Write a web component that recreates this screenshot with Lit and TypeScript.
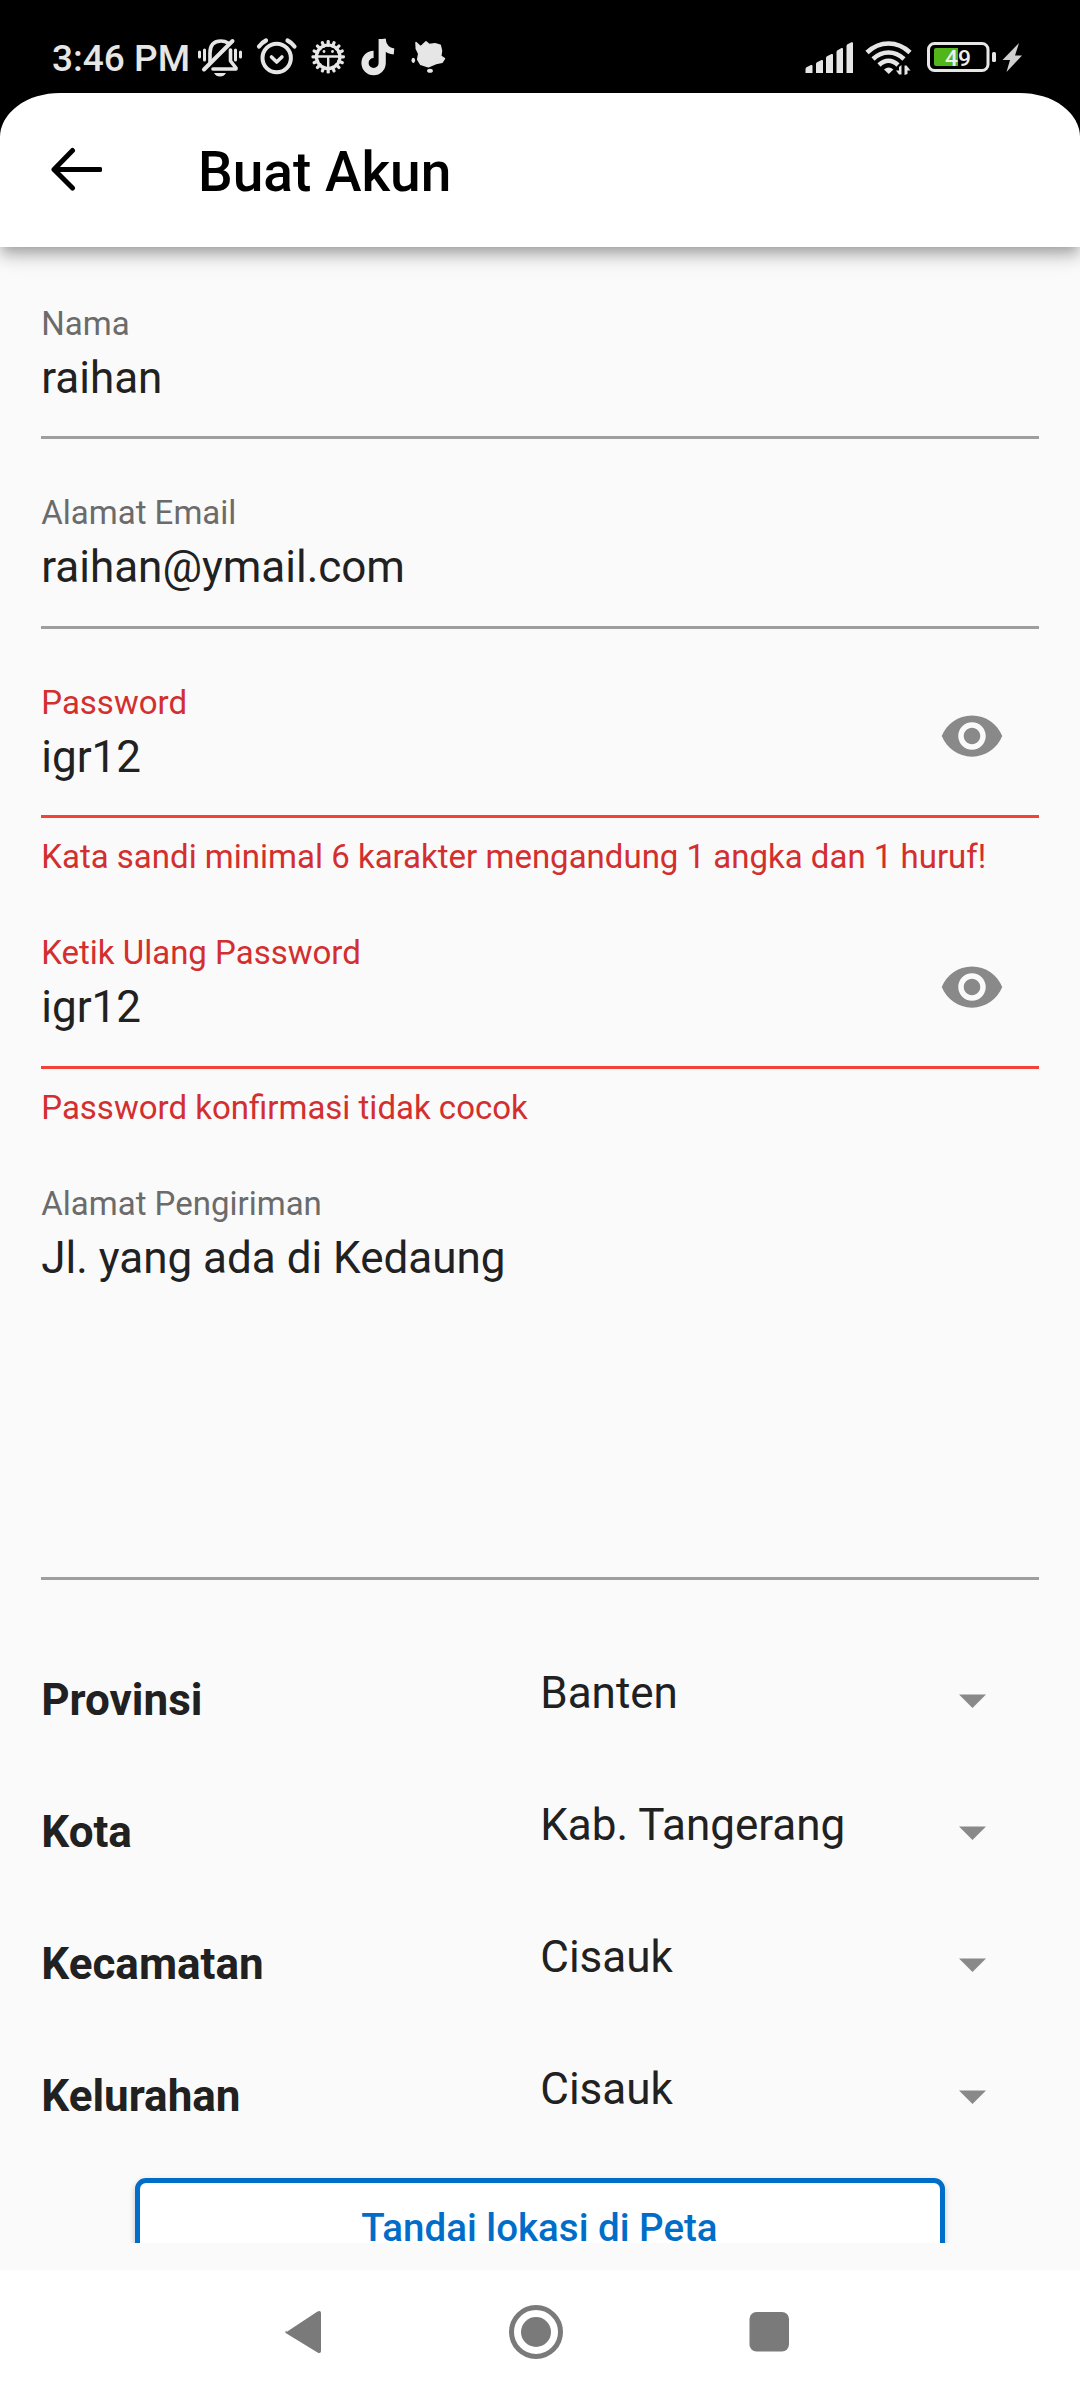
import { LitElement, html, svg, css, nothing } from "lit";
import { customElement, property } from "lit/decorators.js";

@customElement("status-bar")
class StatusBar extends LitElement {
  static styles = css`
    :host { display: flex; height: 93px; background: #000; color: #e6e6e6; padding: 0 56px 0 51px; justify-content: space-between; box-sizing: border-box; }
    .group { display: flex; align-items: flex-start; }
    .clock { font: 500 37px/44px Roboto, sans-serif; padding: 37px 0 0 1px; width: 146px; box-sizing: border-box; white-space: nowrap; }
    svg { display: block; }
    .pct { font: 500 22.500px Roboto, sans-serif; fill: #eee; }
  `;
  render() {
    const teeth = Array.from({ length: 16 }, (_, i) => i * 22.5);
    return html`
      <div class="group">
        <div class="clock">3:46 PM</div>
        <svg width="253" height="93" viewBox="197 0 253 93" fill="none" stroke="#e6e6e6" stroke-linecap="round" stroke-linejoin="round">
          <g stroke-width="3">
            <path d="M199.500 52v5M204.500 50v10M235.500 50v10M240.500 52v5" />
          </g>
          <path d="M210 62V53q0-12 11-12 4 0 7 2" stroke-width="3.600" />
          <path d="M204 69.500L232.500 41" stroke-width="4" />
          <path d="M230.500 50v11l5.500 7v1H213" stroke-width="3.600" />
          <path d="M214 73h12q-2 3.600-6 3.600t-6-3.600z" fill="#e6e6e6" stroke="none" />
          <circle cx="276.700" cy="58" r="14.200" stroke-width="4" />
          <path d="M271.500 57l5.200 5 5.200-5" stroke-width="3.600" />
          <path d="M259 46.500q3-4 7-6M287.500 40.500q4 2 7 6" stroke-width="4.200" />
          <g stroke="none" fill="#e6e6e6">
            ${teeth.map((a) => svg`<rect x="326.600" y="40" width="3.200" height="7" rx="1.400" transform="rotate(${a} 328.200 56.800)" />`)}
          </g>
          <circle cx="328.200" cy="56.800" r="11.800" stroke-width="3.200" />
          <path d="M317 56.500h22.500M328.200 57v11" stroke-width="2.400" />
          <circle cx="324" cy="51.500" r="1.400" fill="#e6e6e6" stroke="none" />
          <circle cx="332.500" cy="51.500" r="1.400" fill="#e6e6e6" stroke="none" />
          <path d="M382.200 39V63a8.600 8.600 0 1 1-8.600-8.600" stroke-width="7.200" stroke-linecap="butt" />
          <path d="M382.500 39q1.500 11.500 11.500 12.500" stroke-width="6" stroke-linecap="butt" />
          <path d="M416 42.500l4.700 4.200 5.300-5 3.300 2.800 5.700-.7 5.200 1.500 1.300 5.400-.7 5.300 3.700 2.700-2.300 3.500-6.200 1.300-7.700 3.300-7.800-2.600-2.800-4.900 1-5.500-2.400-5z" fill="#e6e6e6" stroke-width="1.500" />
          <ellipse cx="413.300" cy="60.300" rx="1.800" ry="2.600" fill="#e6e6e6" stroke="none" />
          <ellipse cx="430" cy="70.700" rx="2.900" ry="2" fill="#e6e6e6" stroke="none" />
        </svg>
      </div>
      <svg width="219" height="93" viewBox="805 0 219 93" fill="#e6e6e6">
        <path d="M805.500 73v-4q0-1.500 1.500-2l4-2q1.500-.5 1.500 1v7zM816 73v-9q0-1.500 1.500-2l4-2q1.500-.5 1.500 1v12zM826 73v-15q0-1.500 1.500-2l4-2q1.500-.5 1.500 1v18zM836.500 73V52q0-1.500 1.500-2l3.500-2q1.500-.5 1.500 1v24zM846.500 73V46q0-1.500 1.500-2l3.500-1.700q1.500-.5 1.500 1V73z" />
        <g fill="none" stroke="#e6e6e6" stroke-width="4.600">
          <path d="M867 52.500q9.500-9 21.500-9t21.500 9" />
          <path d="M873 59q7-6.500 15.500-6.500T904 59" />
          <path d="M879 65q4.500-4.300 9.500-4.300t9.500 4.300" />
        </g>
        <path d="M884 69.500q4.700-4 9.400 0l-4.700 4.500z" />
        <path d="M901.500 65v9.500h-2.500l-3-4h3V67zM904.500 75V65.500h2l4 5h-3V74z" />
        <rect x="928.500" y="43.500" width="59.500" height="27" rx="6" fill="none" stroke="#e6e6e6" stroke-width="3" />
        <path d="M936 48h22v18h-22q-2 0-2-2V50q0-2 2-2z" fill="#52b51a" />
        <rect x="992" y="52" width="4" height="10" rx="1.500" />
        <text class="pct" x="945" y="65.500" textLength="26" lengthAdjust="spacingAndGlyphs">49</text>
        <path d="M1019 43l-16.500 17h7.500l-3.500 12L1022 55.500h-7z" fill="#d0d0d0" />
      </svg>`;
  }
}

@customElement("form-field")
class FormField extends LitElement {
  static styles = css`
    :host { display: block; font-family: Roboto, sans-serif; color: #212121; }
    .label, .error { font-size: 33px; line-height: 38px; white-space: nowrap; }
    .label { color: #6b6b6b; }
    .error, .bad .label { color: #d32f2f; }
    .row { display: flex; justify-content: space-between; }
    .value { font-size: 44px; line-height: 52px; margin-top: 9px; white-space: nowrap; }
    .line { height: 3px; margin-top: 32.500px; background: #9e9e9e; }
    .tall .line { margin-top: 293px; }
    .bad .line { background: #f44336; }
    .error { margin-top: 20.250px; }
    .eye { margin: 19.500px 33.500px -33px 0; width: 66px; height: 66px; }
    svg { display: block; width: 66px; height: 66px; fill: #898989; }
  `;
  @property() label = "";
  @property() value = "";
  @property() error = "";
  @property({ type: Boolean }) secret = false;
  @property({ type: Boolean }) tall = false;
  render() {
    return html`<div class="${this.error ? "bad" : ""} ${this.tall ? "tall" : ""}">
      <div class="row">
        <div>
          <div class="label">${this.label}</div>
          <div class="value">${this.value}</div>
        </div>
        ${this.secret
          ? html`<div class="eye"><svg viewBox="0 0 24 24"><path d="M12 4.500C7 4.500 2.730 7.610 1 12c1.730 4.390 6 7.500 11 7.500s9.270-3.110 11-7.500c-1.730-4.390-6-7.500-11-7.500zM12 17c-2.760 0-5-2.240-5-5s2.240-5 5-5 5 2.240 5 5-2.240 5-5 5zm0-8c-1.660 0-3 1.340-3 3s1.340 3 3 3 3-1.340 3-3-1.340-3-3-3z" /></svg></div>`
          : nothing}
      </div>
      <div class="line"></div>
      ${this.error ? html`<div class="error">${this.error}</div>` : nothing}
    </div>`;
  }
}

const REGIONS = [
  ["Provinsi", "Banten"],
  ["Kota", "Kab. Tangerang"],
  ["Kecamatan", "Cisauk"],
  ["Kelurahan", "Cisauk"],
];

@customElement("app-root")
class AppRoot extends LitElement {
  static styles = css`
    :host { display: block; width: 1080px; height: 2400px; overflow: hidden; background: #fafafa; font-family: Roboto, sans-serif; color: #212121; }
    .page { display: flex; flex-direction: column; height: 2400px; }
    .head { background: #000; }
    .shade { box-shadow: 0 6px 11px -3px rgba(0,0,0,.2), 0 11px 14px rgba(0,0,0,.14), 0 3px 27px rgba(0,0,0,.12); z-index: 1; flex: none; }
    .appbar { height: 154px; display: flex; align-items: center; background: #fff; border-radius: 60px 60px 0 0 / 44px 44px 0 0; }
    .back { width: 52px; height: 44px; margin: -3px 96px 0 50px; }
    .title { font-size: 55px; line-height: 64px; padding-top: 3px; font-weight: 500; color: #000; white-space: nowrap; }
    .form { height: 1996px; overflow: hidden; padding: 57.500px 41.250px 0; box-sizing: border-box; flex: none; }
    .field { height: 189.500px; }
    .field.warn { height: 250.500px; }
    .field.confirm { height: 251px; }
    .field.last { height: 465px; }
    .region { display: grid; grid-template-columns: 499px 1fr 27px; height: 132px; font-size: 44px; line-height: 52px; padding-right: 53px; box-sizing: border-box; }
    .name { font-weight: 700; padding-top: 24px; }
    .val { padding-top: 17px; white-space: nowrap; }
    .drop { margin-top: 44px; width: 27px; height: 14px; fill: #898989; }
    .btn { margin: 0 93.750px; height: 99px; box-sizing: border-box; border: 5px solid #006ec9; border-radius: 11px; background: #fff; color: #006ec9; font-size: 38.500px; line-height: 44px; font-weight: 500; text-align: center; padding: 23px 1px 0 0; box-shadow: 0 3px 6px rgba(0,0,0,.22); }
    .nav { margin-top: auto; height: 130px; background: #fff; display: flex; justify-content: center; flex: none; }
    .nav svg { display: block; fill: #7a7a7a; }
  `;
  render() {
    return html`<div class="page">
      <div class="shade">
        <status-bar></status-bar>
        <div class="head">
          <div class="appbar">
            <svg class="back" viewBox="0 0 52 44" fill="none" stroke="#000" stroke-width="5" stroke-linecap="round" stroke-linejoin="round"><path d="M22.500 3.500L4 22.500 22.500 41M4 22.500h46" /></svg>
            <div class="title">Buat Akun</div>
          </div>
        </div>
      </div>
      <div class="form">
        <form-field class="field" label="Nama" value="raihan"></form-field>
        <form-field class="field" label="Alamat Email" value="raihan@ymail.com"></form-field>
        <form-field class="field warn" secret label="Password" value="igr12" error="Kata sandi minimal 6 karakter mengandung 1 angka dan 1 huruf!"></form-field>
        <form-field class="field confirm" secret label="Ketik Ulang Password" value="igr12" error="Password konfirmasi tidak cocok"></form-field>
        <form-field class="field last" tall label="Alamat Pengiriman" value="Jl. yang ada di Kedaung"></form-field>
        ${REGIONS.map(
          ([name, val]) => html`<div class="region">
            <div class="name">${name}</div>
            <div class="val">${val}</div>
            <svg class="drop" viewBox="0 0 27 14"><path d="M0 .5h27L13.500 14z" /></svg>
          </div>`
        )}
        <div class="btn">Tandai lokasi di Peta</div>
      </div>
      <div class="nav">
        <svg width="520" height="130" viewBox="280 0 520 130">
          <path d="M286.500 62l31-20.500q3.500-1.500 3.500 1.500v38q0 3-3.500 1.500l-31-19q-2.500-1.500 0-3z" />
          <circle cx="536" cy="62" r="24.500" fill="none" stroke="#7a7a7a" stroke-width="5" />
          <circle cx="536" cy="62" r="15" />
          <rect x="749.500" y="42" width="39.500" height="39.500" rx="7" />
        </svg>
      </div>
    </div>`;
  }
}
